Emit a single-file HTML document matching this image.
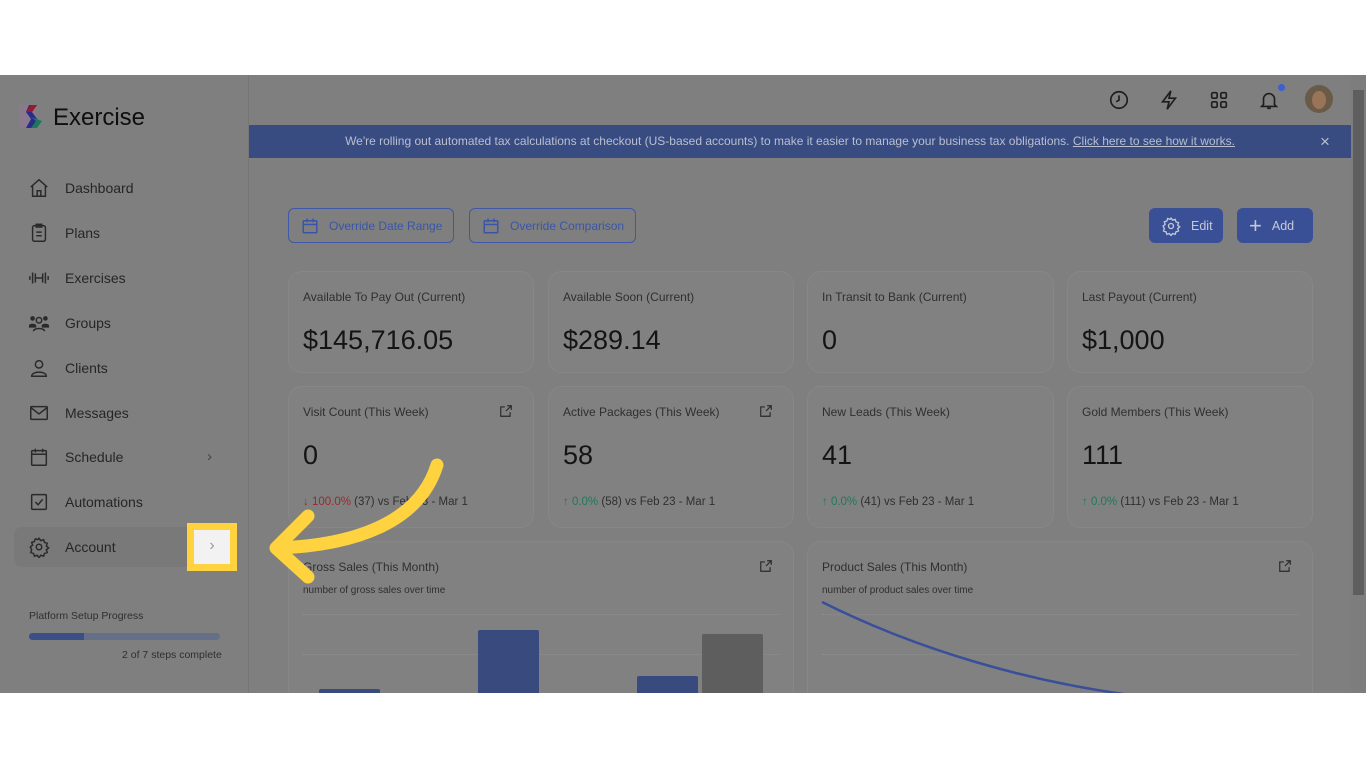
<!DOCTYPE html>
<html><head><meta charset="utf-8"><style>
*{box-sizing:border-box;margin:0;padding:0}
body{width:1366px;height:768px;background:#fff;position:relative;overflow:hidden;font-family:"Liberation Sans",sans-serif}
.app{position:absolute;left:0;top:75px;width:1366px;height:618px;background:#7f7f7f;overflow:hidden}
.side{position:absolute;left:0;top:0;width:249px;height:618px;border-right:1px solid #767676;background:#7f7f7f}
.a{position:absolute}
.nav{position:absolute;left:28px;font-size:14px;color:#262626;display:flex;align-items:center}
.nav svg{width:22px;height:22px;margin-right:15px}
.card{position:absolute;border:1px solid #878787;border-radius:14px;background:#818181}
.lbl{position:absolute;left:14px;top:18px;font-size:12px;color:#2f2f2f}
.big{position:absolute;left:14px;font-size:27px;color:#141414}
.ch{position:absolute;left:14px;font-size:11.5px;color:#2f2f2f}
.g{color:#1e7a58}.r{color:#9a2a2a}
.ext{position:absolute;right:20px;width:14px;height:14px}
.btn{position:absolute;top:133px;height:35px;border:1px solid #3f58a8;border-radius:6px;color:#3a55a8;font-size:12px;display:flex;align-items:center;padding-left:12px;white-space:nowrap}
.btn svg{margin-right:10px}
.fb{position:absolute;top:133px;height:35px;background:#3a5096;border-radius:6px;color:#c4c9d8;font-size:12.5px;display:flex;align-items:center;padding-left:12px}
.dot{position:absolute;left:14px;right:14px;border-top:1px dotted #8f8f8f}
</style></head><body>
<div class="app">
<div class="side">
 <svg class="a" style="left:17px;top:28px" width="28" height="28" viewBox="0 0 28 28"><path d="M2 2h14l6 7-6 7 6 9H2z" fill="#8a7a8c"/><path d="M12 2h8l-5 7 5 7-5 9h-6l5-9-5-7z" fill="#2a2a8a"/><path d="M14 14l5 4-5 7h6l5-7z" fill="#1a7a5a"/><path d="M14 2h6l-5 7h-6z" fill="#9a1a2a"/></svg>
 <div class="a" style="left:53px;top:29px;font-size:24px;color:#0e0e0e">Exercise</div>
 <div class="nav" style="top:102px"><svg viewBox="0 0 24 24" fill="none" stroke="#2a2a2a" stroke-width="1.6"><path d="M3 11l9-8 9 8M5 9v12h14V9M10 21v-6h4v6"/></svg>Dashboard</div>
 <div class="nav" style="top:147px"><svg viewBox="0 0 24 24" fill="none" stroke="#2a2a2a" stroke-width="1.6"><rect x="5" y="4" width="14" height="17" rx="2"/><rect x="9" y="2.5" width="6" height="3"/><path d="M9 11h6M9 15h6"/></svg>Plans</div>
 <div class="nav" style="top:192px"><svg viewBox="0 0 24 24" fill="none" stroke="#2a2a2a" stroke-width="1.6"><path d="M2 10v4M5 6v12M8 7v10M16 7v10M19 6v12M22 10v4M8 12h8"/></svg>Exercises</div>
 <div class="nav" style="top:237px"><svg viewBox="0 0 24 24" fill="#2a2a2a"><circle cx="5" cy="7" r="2.5"/><circle cx="19" cy="7" r="2.5"/><circle cx="12" cy="9" r="3" fill="none" stroke="#2a2a2a" stroke-width="1.6"/><path d="M1 15c0-3 8-3 8 0v2H1zM15 15c0-3 8-3 8 0v2h-8z"/><path d="M6 21c0-4 12-4 12 0" fill="none" stroke="#2a2a2a" stroke-width="1.6"/></svg>Groups</div>
 <div class="nav" style="top:282px"><svg viewBox="0 0 24 24" fill="none" stroke="#2a2a2a" stroke-width="1.6"><circle cx="12" cy="8" r="4"/><path d="M4 21c0-6 16-6 16 0z"/></svg>Clients</div>
 <div class="nav" style="top:327px"><svg viewBox="0 0 24 24" fill="none" stroke="#2a2a2a" stroke-width="1.6"><rect x="3" y="5" width="18" height="14" rx="1"/><path d="M3 6l9 7 9-7"/></svg>Messages</div>
 <div class="nav" style="top:371px"><svg viewBox="0 0 24 24" fill="none" stroke="#2a2a2a" stroke-width="1.6"><rect x="4" y="5" width="16" height="16" rx="1"/><path d="M4 9h16M8 3v4M16 3v4"/></svg>Schedule</div>
 <div class="a" style="left:207px;top:373px;font-size:15px;color:#444">›</div>
 <div class="nav" style="top:416px"><svg viewBox="0 0 24 24" fill="none" stroke="#2a2a2a" stroke-width="1.6"><rect x="4" y="4" width="16" height="16" rx="1"/><path d="M8 12l3 3 5-6"/></svg>Automations</div>
 <div class="a" style="left:14px;top:452px;width:222px;height:40px;border-radius:8px;background:#797979"></div>
 <div class="nav" style="top:461px"><svg viewBox="0 0 24 24" fill="none" stroke="#2a2a2a" stroke-width="1.6"><circle cx="12" cy="12" r="3"/><path d="M12 2.5l2 2.5 3-1 1 3 3 1-1 3 2.5 2-2.5 2 1 3-3 1-1 3-3-1-2 2.5-2-2.5-3 1-1-3-3-1 1-3L2.5 12 5 10 4 7l3-1 1-3 3 1z"/></svg>Account</div>
 <div class="a" style="left:187px;top:448px;width:50px;height:48px;background:#ffd23f"></div>
 <div class="a" style="left:194px;top:455px;width:36px;height:34px;background:#f2f2f2;color:#999;font-size:16px;text-align:center;line-height:32px">›</div>
 <div class="a" style="left:29px;top:535px;font-size:10.5px;color:#2f2f2f">Platform Setup Progress</div>
 <div class="a" style="left:29px;top:558px;width:191px;height:7px;border-radius:4px;background:#666f88"></div>
 <div class="a" style="left:29px;top:558px;width:55px;height:7px;border-radius:4px 0 0 4px;background:#3a4f86"></div>
 <div class="a" style="left:122px;top:574px;font-size:10.5px;color:#2f2f2f">2 of 7 steps complete</div>
</div>
<svg class="a" style="left:1108px;top:14px" width="22" height="22" viewBox="0 0 24 24" fill="none" stroke="#1e1e1e" stroke-width="1.8"><circle cx="12" cy="12" r="9"/><path d="M12 7v5l-3 2"/></svg>
<svg class="a" style="left:1158px;top:14px" width="22" height="22" viewBox="0 0 24 24" fill="none" stroke="#1e1e1e" stroke-width="1.8"><path d="M14 2L5 14h7l-2 8 9-12h-7z"/></svg>
<svg class="a" style="left:1208px;top:14px" width="22" height="22" viewBox="0 0 24 24" fill="none" stroke="#1e1e1e" stroke-width="1.8"><rect x="4" y="4" width="6" height="6" rx="1.5"/><rect x="14" y="4" width="6" height="6" rx="1.5"/><rect x="4" y="14" width="6" height="6" rx="1.5"/><rect x="14" y="14" width="6" height="6" rx="1.5"/></svg>
<svg class="a" style="left:1258px;top:14px" width="22" height="22" viewBox="0 0 24 24" fill="none" stroke="#1e1e1e" stroke-width="1.8"><path d="M6 17V11a6 6 0 0112 0v6l2 2H4zM10 21h4"/></svg>
<div class="a" style="left:1278px;top:9px;width:7px;height:7px;border-radius:50%;background:#3d5fd0"></div>
<div class="a" style="left:1305px;top:10px;width:28px;height:28px;border-radius:50%;background:#6a5a48;overflow:hidden"><div style="margin:6px 0 0 7px;width:14px;height:18px;border-radius:50%;background:#9a7458"></div></div>
<div class="a" style="left:249px;top:50px;width:1102px;height:33px;background:#384c82;color:#b9bfd0;font-size:12px;text-align:center;line-height:33px;padding-right:20px">We're rolling out automated tax calculations at checkout (US-based accounts) to make it easier to manage your business tax obligations. <u>Click here to see how it works.</u></div>
<div class="a" style="left:1320px;top:57px;color:#b9bfd0;font-size:17px">×</div>
<div class="a" style="left:1351px;top:0;width:15px;height:618px;background:#7d7d7d"></div>
<div class="a" style="left:1353px;top:15px;width:11px;height:505px;background:#5e5e5e"></div>
<div class="btn" style="left:288px;width:166px"><svg width="18" height="18" viewBox="0 0 24 24" fill="none" stroke="#3a55a8" stroke-width="2"><rect x="3" y="5" width="18" height="16" rx="1"/><path d="M3 10h18M8 2v5M16 2v5"/></svg>Override Date Range</div>
<div class="btn" style="left:469px;width:167px"><svg width="18" height="18" viewBox="0 0 24 24" fill="none" stroke="#3a55a8" stroke-width="2"><rect x="3" y="5" width="18" height="16" rx="1"/><path d="M3 10h18M8 2v5M16 2v5"/></svg>Override Comparison</div>
<div class="fb" style="left:1149px;width:74px"><svg width="20" height="20" viewBox="0 0 24 24" fill="none" stroke="#c4c9d8" stroke-width="1.6" style="margin-right:10px"><circle cx="12" cy="12" r="3"/><path d="M12 2.5l2 2.5 3-1 1 3 3 1-1 3 2.5 2-2.5 2 1 3-3 1-1 3-3-1-2 2.5-2-2.5-3 1-1-3-3-1 1-3L2.5 12 5 10 4 7l3-1 1-3 3 1z"/></svg>Edit</div>
<div class="fb" style="left:1237px;width:76px"><span style="font-size:22px;margin-right:10px;line-height:20px">+</span>Add</div>
<div class="card" style="left:288px;top:196px;width:246px;height:102px"><div class="lbl">Available To Pay Out (Current)</div><div class="big" style="top:53px">$145,716.05</div></div>
<div class="card" style="left:548px;top:196px;width:246px;height:102px"><div class="lbl">Available Soon (Current)</div><div class="big" style="top:53px">$289.14</div></div>
<div class="card" style="left:807px;top:196px;width:247px;height:102px"><div class="lbl">In Transit to Bank (Current)</div><div class="big" style="top:53px">0</div></div>
<div class="card" style="left:1067px;top:196px;width:246px;height:102px"><div class="lbl">Last Payout (Current)</div><div class="big" style="top:53px">$1,000</div></div>
<div class="card" style="left:288px;top:311px;width:246px;height:142px"><div class="lbl">Visit Count (This Week)</div><svg class="ext" style="top:17px" viewBox="0 0 24 24" fill="none" stroke="#2a2a2a" stroke-width="2"><path d="M14 3h7v7M21 3l-9 9M19 14v7H3V5h7"/></svg><div class="big" style="top:53px">0</div><div class="ch" style="top:109px"><span class="r">↓ 100.0%</span> (37) vs Feb 23 - Mar 1</div></div>
<div class="card" style="left:548px;top:311px;width:246px;height:142px"><div class="lbl">Active Packages (This Week)</div><svg class="ext" style="top:17px" viewBox="0 0 24 24" fill="none" stroke="#2a2a2a" stroke-width="2"><path d="M14 3h7v7M21 3l-9 9M19 14v7H3V5h7"/></svg><div class="big" style="top:53px">58</div><div class="ch" style="top:109px"><span class="g">↑ 0.0%</span> (58) vs Feb 23 - Mar 1</div></div>
<div class="card" style="left:807px;top:311px;width:247px;height:142px"><div class="lbl">New Leads (This Week)</div><div class="big" style="top:53px">41</div><div class="ch" style="top:109px"><span class="g">↑ 0.0%</span> (41) vs Feb 23 - Mar 1</div></div>
<div class="card" style="left:1067px;top:311px;width:246px;height:142px"><div class="lbl">Gold Members (This Week)</div><div class="big" style="top:53px">111</div><div class="ch" style="top:109px"><span class="g">↑ 0.0%</span> (111) vs Feb 23 - Mar 1</div></div>
<div class="card" style="left:288px;top:466px;width:506px;height:170px;overflow:hidden"><div class="lbl">Gross Sales (This Month)</div><svg class="ext" style="top:17px" viewBox="0 0 24 24" fill="none" stroke="#2a2a2a" stroke-width="2"><path d="M14 3h7v7M21 3l-9 9M19 14v7H3V5h7"/></svg><div class="a" style="left:14px;top:43px;font-size:10px;color:#2f2f2f">number of gross sales over time</div>
<div class="dot" style="top:72px"></div><div class="dot" style="top:112px"></div><div class="dot" style="top:151px"></div>
<div class="a" style="left:30px;top:147px;width:61px;height:30px;background:#384a7e;border-radius:2px"></div>
<div class="a" style="left:189px;top:88px;width:61px;height:90px;background:#384a7e;border-radius:2px"></div>
<div class="a" style="left:348px;top:134px;width:61px;height:50px;background:#384a7e;border-radius:2px"></div>
<div class="a" style="left:413px;top:92px;width:61px;height:90px;background:#5e5e5e;border-radius:2px"></div></div>
<div class="card" style="left:807px;top:466px;width:506px;height:170px;overflow:hidden"><div class="lbl">Product Sales (This Month)</div><svg class="ext" style="top:17px" viewBox="0 0 24 24" fill="none" stroke="#2a2a2a" stroke-width="2"><path d="M14 3h7v7M21 3l-9 9M19 14v7H3V5h7"/></svg><div class="a" style="left:14px;top:43px;font-size:10px;color:#2f2f2f">number of product sales over time</div>
<div class="dot" style="top:72px"></div><div class="dot" style="top:112px"></div><div class="dot" style="top:151px"></div>
<svg class="a" style="left:0;top:0" width="506" height="170"><path d="M14 60 C110 108 220 140 330 154" fill="none" stroke="#3a4f9a" stroke-width="2.5"/></svg></div>
</div>
<svg class="a" style="left:0;top:0" width="1366" height="768"><path d="M437 465 C420 520 360 545 278 548" fill="none" stroke="#ffd23f" stroke-width="13" stroke-linecap="round"/><path d="M308 516 L276 548 L308 577" fill="none" stroke="#ffd23f" stroke-width="13" stroke-linecap="round" stroke-linejoin="round"/></svg>
</body></html>
